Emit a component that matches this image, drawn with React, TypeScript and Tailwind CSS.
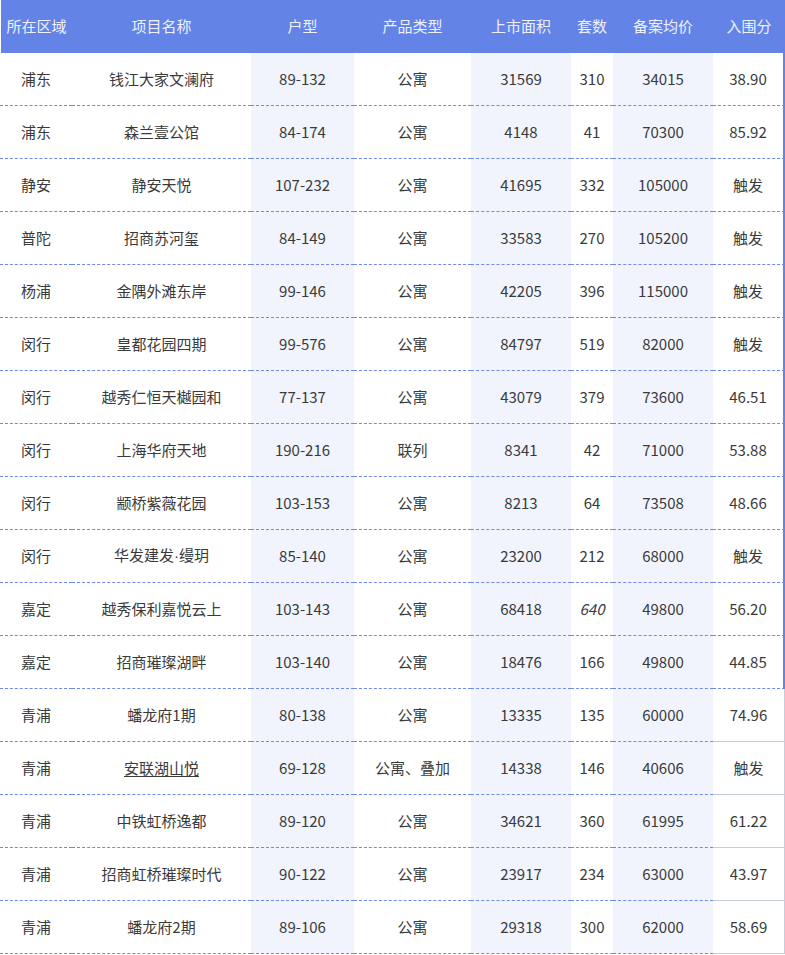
import React from "react";

type Row = [string, string, string, string, string, string, string, string];

const rows: Row[] = [
    ["浦东", "钱江大家文澜府", "89-132", "公寓", "31569", "310", "34015", "38.90"],
    ["浦东", "森兰壹公馆", "84-174", "公寓", "4148", "41", "70300", "85.92"],
    ["静安", "静安天悦", "107-232", "公寓", "41695", "332", "105000", "触发"],
    ["普陀", "招商苏河玺", "84-149", "公寓", "33583", "270", "105200", "触发"],
    ["杨浦", "金隅外滩东岸", "99-146", "公寓", "42205", "396", "115000", "触发"],
    ["闵行", "皇都花园四期", "99-576", "公寓", "84797", "519", "82000", "触发"],
    ["闵行", "越秀仁恒天樾园和", "77-137", "公寓", "43079", "379", "73600", "46.51"],
    ["闵行", "上海华府天地", "190-216", "联列", "8341", "42", "71000", "53.88"],
    ["闵行", "颛桥紫薇花园", "103-153", "公寓", "8213", "64", "73508", "48.66"],
    ["闵行", "华发建发·缦玥", "85-140", "公寓", "23200", "212", "68000", "触发"],
    ["嘉定", "越秀保利嘉悦云上", "103-143", "公寓", "68418", "640", "49800", "56.20"],
    ["嘉定", "招商璀璨湖畔", "103-140", "公寓", "18476", "166", "49800", "44.85"],
    ["青浦", "蟠龙府1期", "80-138", "公寓", "13335", "135", "60000", "74.96"],
    ["青浦", "安联湖山悦", "69-128", "公寓、叠加", "14338", "146", "40606", "触发"],
    ["青浦", "中铁虹桥逸都", "89-120", "公寓", "34621", "360", "61995", "61.22"],
    ["青浦", "招商虹桥璀璨时代", "90-122", "公寓", "23917", "234", "63000", "43.97"],
    ["青浦", "蟠龙府2期", "89-106", "公寓", "29318", "300", "62000", "58.69"],
];

const headers = ["所在区域", "项目名称", "户型", "产品类型", "上市面积", "套数", "备案均价", "入围分"];
const shaded = [2, 4, 6];

function Cell({ text, r, c }: { text: string; r: number; c: number }) {
    if (r === 10 && c === 5) return <span className="italic">{text}</span>;
    if (r === 13 && c === 1) return <span className="underline underline-offset-2">{text}</span>;
    if (text.includes("·")) {
        const [a, b] = text.split("·");
        return (
            <span>
                {a}
                <span style={{ fontFamily: '"Liberation Sans", sans-serif' }}>·</span>
                {b}
            </span>
        );
    }
    return <>{text}</>;
}

export default function App() {
    return (
        <div className="w-[785px] bg-white text-[15px] text-[#3a3a3a]" style={{ fontFamily: '"Noto Sans CJK SC", sans-serif' }}>
            <div className="grid grid-cols-[72px_179px_103px_117px_100px_42px_100px_72px]">
                {headers.map((h, i) => (
                    <div key={h} className={`h-[53px] bg-[#6383e6] text-[#eef1fc] flex items-center justify-center ${i === 0 ? "border-l border-white" : ""}`}>
                        {h}
                    </div>
                ))}

                {rows.map((row, r) =>
                    row.map((cell, c) => {
                        const last = c === 7;
                        let border = "border-b border-dashed border-[#6e8be9]";
                        if (last && r < 12) border += " border-r-2 [border-right-style:solid] border-r-[#6383e6]";
                        if (last && r >= 12) border = "border-b border-r border-solid border-[#c5ccda]";
                        return (
                            <div
                                key={r + "-" + c}
                                className={`h-[53px] flex items-center justify-center ${border} ${shaded.includes(c) ? "bg-[#f1f4fd]" : ""}`}
                            >
                                <Cell text={cell} r={r} c={c} />
                            </div>
                        );
                    })
                )}
            </div>
        </div>
    );
}
